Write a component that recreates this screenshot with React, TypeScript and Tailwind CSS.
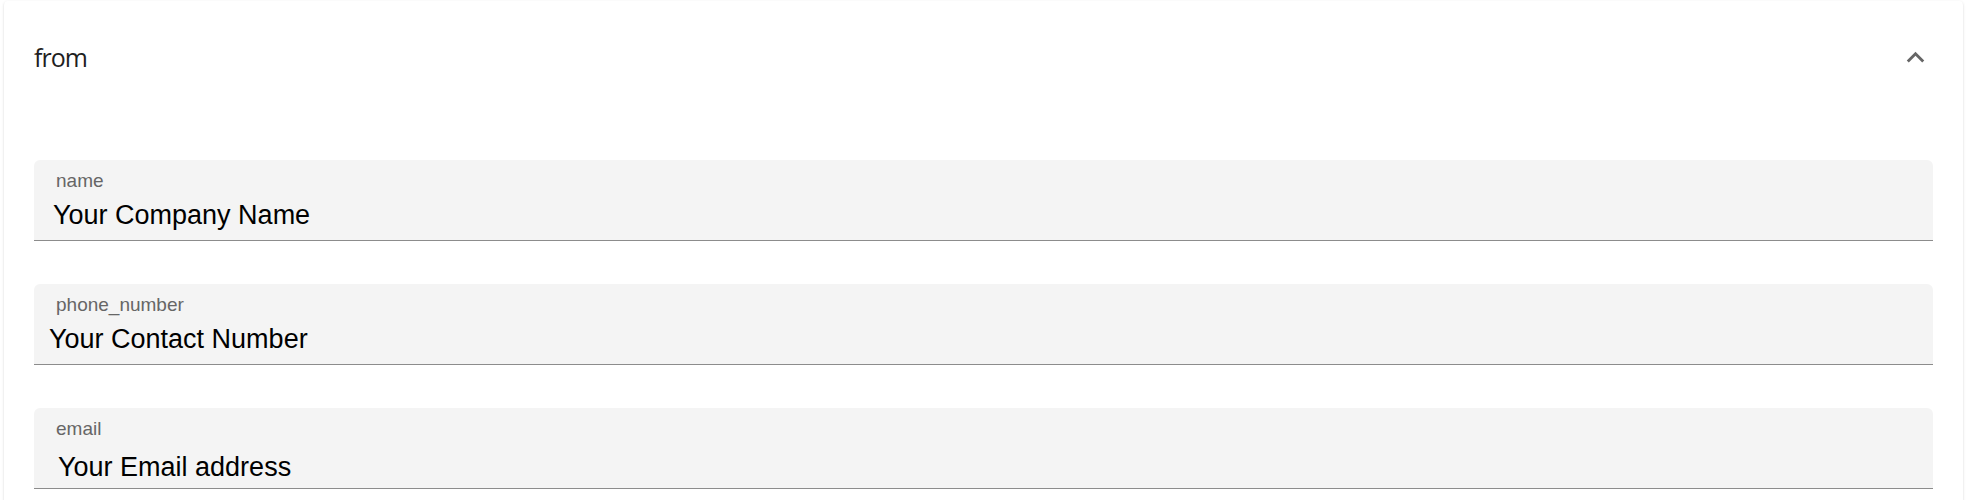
import React from 'react';

type Field = {
  label: string;
  value: string;
  valueX: string;
  valueTop: string;
};

const fields: Field[] = [
  { label: 'name', value: 'Your Company Name', valueX: 'pl-[19px]', valueTop: 'mt-[12px]' },
  { label: 'phone_number', value: 'Your Contact Number', valueX: 'pl-[15px]', valueTop: 'mt-[12px]' },
  { label: 'email', value: 'Your Email address', valueX: 'pl-[24px]', valueTop: 'mt-[16px]' },
];

const ExpandLess = () => (
  <svg viewBox="0 0 24 24" className="w-[35px] h-[35px] fill-[#666666]">
    <path d="m12 8-6 6 1.41 1.41L12 10.83l4.59 4.58L18 14z" />
  </svg>
);

const FilledField: React.FC<{ field: Field }> = ({ field }) => (
  <div className="h-[81px] bg-[#f4f4f4] rounded-t-[6px] border-b border-[#8c8c8c] flex flex-col font-['Liberation_Sans',Arial,sans-serif]">
    <span className="pl-[22px] pt-[11px] text-[19px] leading-none text-[#666666]">
      {field.label}
    </span>
    <span className={`${field.valueX} ${field.valueTop} text-[27px] leading-none text-black`}>
      {field.value}
    </span>
  </div>
);

export default function App() {
  return (
    <div className="w-[1970px] h-[500px] bg-white overflow-hidden pt-[1px] pl-[4px]">
      <div className="w-[1959px] bg-white rounded-[4px] shadow-[0_2px_1px_-1px_rgba(0,0,0,0.2),0_1px_1px_0_rgba(0,0,0,0.14),0_1px_3px_0_rgba(0,0,0,0.12)]">
        {/* Summary */}
        <div className="h-[112px] flex items-center justify-between pl-[30px] pr-[30px]">
          <span className="font-['Open_Sans',sans-serif] text-[25px] tracking-[-1px] text-[#1f1f1f] mt-[2px]">
            from
          </span>
          <ExpandLess />
        </div>

        {/* Details */}
        <div className="flex flex-col gap-[43px] pt-[47px] px-[30px] pb-[30px]">
          {fields.map((f) => (
            <FilledField key={f.label} field={f} />
          ))}
        </div>
      </div>
    </div>
  );
}
